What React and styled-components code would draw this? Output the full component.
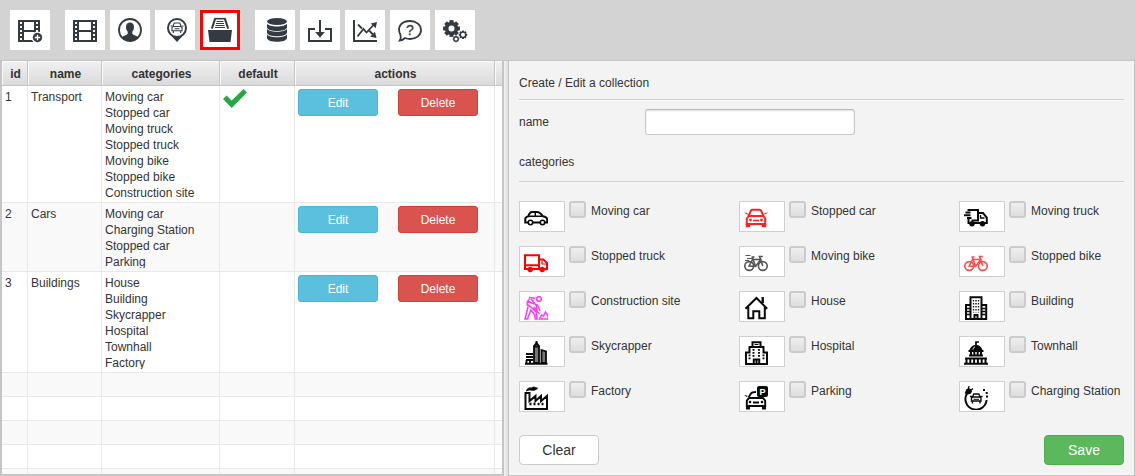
import React from 'react';
import styled, { createGlobalStyle } from 'styled-components';

const GlobalStyle = createGlobalStyle`
  * { box-sizing: border-box; }
  body {
    margin: 0;
    background: #d3d3d3;
    color: #333;
    font: 12px/16px "Liberation Sans", Arial, sans-serif;
  }
`;

const Page = styled.div`
  display: flex;
  flex-direction: column;
  height: 100vh;
`;

const Toolbar = styled.nav`
  display: flex;
  gap: 15px;
  padding: 10px;
`;

const ToolGroup = styled.div`
  display: flex;
  gap: 5px;
`;

const ToolButton = styled.button`
  width: 40px;
  height: 40px;
  padding: 0;
  border: 0;
  background: #fff;
  font: inherit;
  outline: ${(p) => (p.$active ? '3px solid #f00' : 'none')};
  outline-offset: -3px;
  cursor: pointer;

  svg { display: block; }
`;

const Workspace = styled.div`
  flex: 1;
  min-height: 0;
  display: grid;
  grid-template-columns: 504px 5px minmax(0, 1fr);
  border-top: 1px solid #c5c5c5;
`;

const GridPane = styled.section`
  min-height: 0;
  overflow: hidden;
  border: 2px solid #c5c5c5;
  border-top-width: 0;
  background: #fff;
`;

const Splitter = styled.div`
  background: linear-gradient(90deg, #f3f3f3, #dcdcdc);
  border-right: 1px solid #c5c5c5;
`;

const FormPane = styled.form`
  display: flex;
  flex-direction: column;
  overflow: hidden;
  padding: 10px;
  border: solid #c5c5c5;
  border-width: 0 1px 1px 0;
  background: #f3f3f3;
`;

const Table = styled.table`
  width: 100%;
  table-layout: fixed;
  border-collapse: separate;
  border-spacing: 0;
`;

const HeadCell = styled.th`
  height: 25px;
  padding: 2px 0 0 2px;
  border-right: 1px solid #c5c5c5;
  border-bottom: 1px solid #c5c5c5;
  background: linear-gradient(#f1f1f1, #dadada);
  box-shadow: inset 1px 1px 0 #fafafa;

  &:last-child { border-right: 0; }
`;

const Row = styled.tr`
  background: ${(p) => (p.$alt ? '#f9f9f9' : '#fff')};
`;

const Cell = styled.td`
  height: 24px;
  padding: 3px 3px 1px;
  vertical-align: top;
  border-right: 1px solid #e9e9e9;
  border-bottom: 1px solid #e9e9e9;

  &:last-child { border-right: 0; }
`;

const CategoryNames = styled.ul`
  margin: 0 0 2px;
  padding: 0;
  list-style: none;

  li { height: 16px; }
  li:last-child { height: 14px; overflow: hidden; }
`;

const Actions = styled.div`
  display: flex;
  gap: 20px;
`;

const tones = {
  edit: ['#5bc0de', '#46b8da'],
  delete: ['#d9534f', '#d43f3a'],
};

const RowButton = styled.button`
  width: 80px;
  height: 27px;
  padding: 0;
  border: 1px solid ${(p) => tones[p.$tone][1]};
  border-radius: 3px;
  background: ${(p) => tones[p.$tone][0]};
  color: #fff;
  font: inherit;
  cursor: pointer;
`;

const SectionTitle = styled.h2`
  margin: 0;
  padding: 4px 0 ${(p) => (p.$spaced ? 11 : 8)}px;
  border-bottom: 1px solid #cfcfcf;
  box-shadow: 0 1px 0 #fafafa;
  font: inherit;
`;

const Field = styled.div`
  display: grid;
  grid-template-columns: 126px 210px;
  align-items: center;
  margin: 9px 0 15px;
`;

const TextInput = styled.input`
  height: 26px;
  padding: 0 6px;
  border: 1px solid #c9c9c9;
  border-top-color: #b9b9b9;
  border-radius: 3px;
  background: #fff;
  box-shadow: inset 0 1px 2px #ddd;
  font: inherit;
`;

const CategoryGrid = styled.div`
  display: grid;
  grid-template-columns: 1fr 1fr 165px;
  row-gap: 14px;
  margin-top: 19px;
`;

const CategoryOption = styled.label`
  display: flex;
  align-items: flex-start;
  height: 31px;
  white-space: nowrap;
  cursor: pointer;
`;

const Thumb = styled.span`
  width: 46px;
  height: 31px;
  padding: 4px;
  border: 1px solid #d0d0d0;
  background: #fff;

  svg { display: block; }
`;

const Checkbox = styled.input`
  appearance: none;
  width: 17px;
  height: 17px;
  margin: 0 5px 0 4px;
  border: 2px solid #cbcbcb;
  border-radius: 3px;
  background: linear-gradient(#efefef, #dedede);

  &:checked { background: #5bc0de; }
`;

const OptionText = styled.span`
  padding-top: 2px;
`;

const Footer = styled.div`
  display: flex;
  justify-content: space-between;
  margin-top: auto;
`;

const FormButton = styled.button`
  width: 80px;
  height: 30px;
  padding: 0;
  border: 1px solid ${(p) => (p.$primary ? '#4cae4c' : '#ccc')};
  border-radius: 4px;
  background: ${(p) => (p.$primary ? '#5cb85c' : '#fff')};
  color: ${(p) => (p.$primary ? '#fff' : '#333')};
  font: inherit;
  font-size: 14px;
  cursor: pointer;
`;

const INK = '#343a42';

function ToolIcon({ children }) {
  return (
    <svg width="40" height="40" viewBox="0 0 40 40" fill="none" stroke={INK} strokeWidth="2" aria-hidden="true">
      {children}
    </svg>
  );
}

function Film({ right }) {
  const holes = [12, 16, 20, 24, 28];
  return (
    <g stroke="none">
      <rect x="8" y="10" width={right - 8} height="22" fill={INK} />
      <rect x="14" y="12" width={right - 20} height="8" fill="#fff" />
      <rect x="14" y="22" width={right - 20} height="8" fill="#fff" />
      {holes.map((y) => (
        <g key={y} fill="#fff">
          <rect x="10" y={y} width="2" height="2" />
          <rect x={right - 4} y={y} width="2" height="2" />
        </g>
      ))}
    </g>
  );
}

function Gear({ x, y, r, hole, tooth }) {
  return (
    <g transform={`translate(${x} ${y})`} stroke="none">
      {[0, 45, 90, 135].map((a) => (
        <rect key={a} x={-tooth / 2} y={-r} width={tooth} height={r * 2} fill={INK} transform={`rotate(${a})`} />
      ))}
      <circle r={r * 0.8} fill={INK} />
      <circle r={hole} fill="#fff" />
    </g>
  );
}

const toolIcons = {
  addVideo: (
    <>
      <Film right={30} />
      <circle cx="27.5" cy="27.5" r="6" fill="#fff" stroke="none" />
      <circle cx="27.5" cy="27.5" r="4.7" fill={INK} stroke="none" />
      <path d="M27.5 24.8v5.4M24.8 27.5h5.4" stroke="#fff" strokeWidth="1.4" />
    </>
  ),
  videos: <Film right={32} />,
  users: (
    <>
      <circle cx="20" cy="20" r="11" strokeWidth="1.8" />
      <path d="M16 17c0-3 1.5-4.6 4-4.6s4 1.6 4 4.6c0 2-.7 3.6-1.7 4.8v2c1 1.6 4.2 1.8 6.2 3.7C26.5 30 23.5 31 20 31s-6.500-1-8.500-3.500c2-1.900 5.200-2.100 6.200-3.700v-2C16.700 20.600 16 19 16 17z" fill={INK} stroke="none" />
    </>
  ),
  locations: (
    <>
      <path d="M16 25.500l6 6.500 6-6.500z" fill={INK} stroke="none" />
      <circle cx="22" cy="18" r="9" fill="#fff" strokeWidth="2" />
      <path d="M18 16.500l1.200-3.500h5.600l1.200 3.500M17 20.800v-3.300l1.200-1h7.600l1.200 1v3.300zM18.300 21v2M25.700 21v2M19.500 18.800h5M15.500 16h1.800M26.700 16h1.800" strokeWidth="1.100" />
    </>
  ),
  collections: (
    <>
      <path d="M8 20h24l-1.500 12h-21z" fill={INK} stroke="none" />
      <path d="M11.800 18.600l3.300-9.700M28.200 18.600l-3.300-9.700" strokeWidth="2" />
      <path d="M14.300 8.700h11.400" strokeWidth="1.600" />
      <path d="M16.500 11.500h7M16 13.500h8M15.500 15.500h9M15 17.500h10" strokeWidth="1" />
    </>
  ),
  database: (
    <g fill={INK} stroke="none">
      <ellipse cx="22" cy="11.500" rx="10" ry="3.500" />
      {[13.5, 18.8, 24.2].map((y) => (
        <path key={y} d={`M12 ${y}c1.500 4 18.500 4 20 0v4c-1 4.700-19 4.700-20 0z`} />
      ))}
    </g>
  ),
  importData: (
    <>
      <path d="M15 19H9v12h22V19h-6M20 10v14" strokeWidth="2" />
      <path d="M15.200 22h9.600L20 27.800z" fill={INK} stroke="none" />
    </>
  ),
  statistics: (
    <>
      <path d="M9 10v21h23" />
      <path d="M12.500 26.500l6-7.500 3 3.500 7.500-8M13 14.500l4 4M23.500 20l5 5" strokeWidth="1.800" />
      <path d="M32 12l-1.400 6.200-4.800-4.600zM31.500 28l-6.300-1.300 4.800-5z" fill={INK} stroke="none" />
    </>
  ),
  help: (
    <>
      <path d="M10.500 25C6 16 12.500 11 20 11c6.500 0 11 4 11 9s-4.500 9-11 9c-2 0-3.500-.4-5-1-1.500 1.500-3.200 2.300-5.300 2.600 1-1.700 1.400-3.600.8-5.600z" strokeWidth="1.800" />
      <text x="20" y="25" textAnchor="middle" fontSize="14" fill={INK} stroke={INK} strokeWidth="0.300">?</text>
    </>
  ),
  settings: (
    <>
      <Gear x={16.5} y={18.5} r={8.4} hole={3} tooth={4} />
      <Gear x={28} y={24.8} r={4.2} hole={2} tooth={2} />
      <Gear x={21} y={29} r={3.3} hole={1.5} tooth={1.5} />
    </>
  ),
};

function CategoryIcon({ color = '#0a0a0a', children }) {
  return (
    <svg width="24" height="24" viewBox="0 0 24 24" color={color} fill="none" stroke="currentColor" strokeWidth="1.600" aria-hidden="true">
      {children}
    </svg>
  );
}

const bike = (
  <>
    <circle cx="5.200" cy="15" r="4.400" />
    <circle cx="18.800" cy="15" r="4.400" />
    <path d="M5.200 15L8.500 8.500h8.200L11.500 15.500zM7.500 6h3M8.500 6.500l3 9M18.800 15L15.500 5.500h3.300" />
  </>
);

const categoryIcons = {
  'Moving car': (
    <CategoryIcon>
      <path d="M4 16.500H1.300v-4.200c.7-1.200 1.700-1.700 3-2C5.300 7.300 6.200 6 8 6h5c2.500 0 4 1.500 6 4.300 2.800.5 4.200 1.500 4.200 3.700v2.500H21M9 16.500h7" strokeWidth="2" />
      <path d="M5 10.300h13M11.300 6v4.300" strokeWidth="1.500" />
      <circle cx="6.500" cy="16.500" r="2.200" fill="#fff" />
      <circle cx="18.500" cy="16.500" r="2.200" fill="#fff" />
    </CategoryIcon>
  ),
  'Stopped car': (
    <CategoryIcon color="#f22">
      <path d="M4.500 10L7 4.500Q7.500 3.800 9 3.800h6q1.500 0 2 .7L19.500 10M2.800 18v-5.500L4.800 10h14.400l2 2.500V18z" strokeWidth="2" />
      <path d="M1.800 18h4.400v3.300H1.800zM17.800 18h4.400v3.300h-4.400zM0 6.500l3.500.5v2zM24 6.500l-3.500.5v2z" fill="currentColor" stroke="none" />
      <circle cx="6.500" cy="14" r="1.400" fill="currentColor" stroke="none" />
      <circle cx="17.500" cy="14" r="1.400" fill="currentColor" stroke="none" />
      <path d="M9 14.500h6" />
    </CategoryIcon>
  ),
  'Moving truck': (
    <CategoryIcon>
      <path d="M3.500 4H14v10.500H7.500M14 7h5l3.800 4.500V17h-2.300M1.500 6.500h5M0 9.200h6.500M3 12h4.500M4.500 12v5H6M10 17h6.500" strokeWidth="2" />
      <path d="M16.500 9v3h4" strokeWidth="1.300" />
      <circle cx="8" cy="17.800" r="2.700" fill="currentColor" stroke="none" />
      <circle cx="18.500" cy="17.800" r="2.700" fill="currentColor" stroke="none" />
    </CategoryIcon>
  ),
  'Stopped truck': (
    <CategoryIcon color="#f00">
      <path d="M1 4.300h14V18H1zM1 14.300h14M15 8.500h4.500L23 12v6h-8" strokeWidth="2" />
      <path d="M18 9.500v3.500h4.500" strokeWidth="1.200" />
      <circle cx="6.200" cy="18.500" r="2.700" fill="currentColor" stroke="none" />
      <circle cx="18.200" cy="18.500" r="2.700" fill="currentColor" stroke="none" />
    </CategoryIcon>
  ),
  'Moving bike': (
    <CategoryIcon color="#555">
      {bike}
      <path d="M1.500 4.500h5M3 7.500h5M1 9.500h4" strokeWidth="1.200" />
    </CategoryIcon>
  ),
  'Stopped bike': <CategoryIcon color="#ff4b4b">{bike}</CategoryIcon>,
  'Construction site': (
    <CategoryIcon color="#fa3cfa">
      <circle cx="15" cy="3" r="2.300" />
      <path d="M5 1.500l6.500.8M6 2.500C3 5 2.500 7 3.500 9.500l4 1.500M7 3l5 6 1 5-3.500-3M4 5l6 3M13 8l3 7M4 11L1 23h2.500l3.300-9 3.500 4 1 5h2l-1.300-7-5-5M3 8l13 10M15.500 23l2-4 2 1 2-4L24 20v3z" strokeWidth="1.500" />
    </CategoryIcon>
  ),
  House: (
    <CategoryIcon>
      <path d="M1.500 12.800L12.500 2l10.700 10.800M4.300 11v11.300h5v-7h6v7h5.500V11" strokeWidth="2" />
      <path d="M18.700 1v6" strokeWidth="2.400" />
    </CategoryIcon>
  ),
  Building: (
    <CategoryIcon>
      <path d="M6.500 23V1.200h11V23M6.500 9H2v14h20.200V9h-4.700M10.500 23v-4h3v4" strokeWidth="2" />
      <path d="M9.500 4v12.500M12 4v12.500M14.500 4v12.500" strokeDasharray="1.500 1.500" strokeWidth="1.300" />
      <path d="M3 12.500h3M3 15.500h3M3 18.500h3M18 12.500h3.500M18 15.500h3.500M18 18.500h3.500" strokeWidth="1.300" />
    </CategoryIcon>
  ),
  Skycrapper: (
    <CategoryIcon>
      <path d="M10 22V5l2.500-3L15 5v17zM17.500 9l4.500 1.500V22h-4.500z" fill="#777" strokeWidth="1.800" />
      <path d="M12.500 0v4M9.500 5.500h6M2 13h7M2 16h7M2 19h7M1 22.800h22.500M2.500 22v-3M6 22v-3" strokeWidth="1.900" />
    </CategoryIcon>
  ),
  Hospital: (
    <CategoryIcon>
      <path d="M8.500 6V1.200h8V6M2 23V11.500h3.500V6h14v5.500H23V23zM9.800 23v-4.500h5.400V23M12.500 18.500V23" strokeWidth="2" />
      <path d="M10.500 3.500h4M10.500 5.500h4" strokeWidth="1" />
      <path d="M9.500 8v9M15 8v9M5.500 13.500v6M19.500 13.500v6" strokeWidth="1.900" strokeDasharray="1.700 1.300" />
    </CategoryIcon>
  ),
  Townhall: (
    <CategoryIcon>
      <path d="M12 4V1h3" strokeWidth="1.700" />
      <path d="M5.500 9.500C6.500 2 17.500 2 18.500 9.500z" fill="currentColor" stroke="none" />
      <path d="M9 8.500c.3-1.500 1-2.300 2-2.800" stroke="#fff" strokeWidth="1" />
      <path d="M4.500 10h15M7 11v4M10.300 11v4M13.700 11v4M17 11v4M5 14.500h14M1 17.500h22M2.500 18v4M6.300 18v4M10.100 18v4M13.900 18v4M17.700 18v4M21.500 18v4M0 22.800h24" strokeWidth="2" />
    </CategoryIcon>
  ),
  Factory: (
    <CategoryIcon>
      <path d="M1.500 23V7h4v8l6-5v5l5.500-5v5l6-5v13z" strokeWidth="2" />
      <path d="M2.500 5c.5-2.500 2.500-3.500 5-3 2.500-2 3.500 0 6 .2-2 2-4 2.500-6.500 1.800C5.500 3.700 4 4 2.500 5z" fill="currentColor" strokeWidth="1" />
      <path d="M5.500 18h14" strokeWidth="2.400" strokeDasharray="2 2" />
    </CategoryIcon>
  ),
  Parking: (
    <CategoryIcon>
      <rect x="13" y="0" width="11" height="11" rx="2" fill="currentColor" stroke="none" />
      <text x="18.500" y="9" textAnchor="middle" fontSize="9" fontWeight="bold" fill="#fff" stroke="none">P</text>
      <path d="M4.500 11.500L7 7.500Q8 6 12 6M2.800 20v-5.500L5 12h14l2.200 2.500V20zM9 16.500h6" strokeWidth="1.900" />
      <path d="M2 20h4v3.500H2zM18 20h4v3.500h-4zM0 9l3.500.7-.5 1.500z" fill="currentColor" stroke="none" />
      <circle cx="6" cy="16" r="1.300" fill="currentColor" stroke="none" />
      <circle cx="18" cy="16" r="1.300" fill="currentColor" stroke="none" />
    </CategoryIcon>
  ),
  'Charging Station': (
    <CategoryIcon>
      <path d="M2.700 8A10.600 10.600 0 1 0 22.600 14" strokeWidth="2" />
      <path d="M1.500 7L3 3.500l2.500-.5 2 2L6.500 7 3.500 8zM4 3L5.200 0M6.500 4.500L9 2.500" fill="currentColor" strokeWidth="1.300" />
      <path d="M19 4h2M21.700 7h2M22 10.500h2" strokeWidth="2" />
      <path d="M8.500 11l1.300-3h5l1.300 3M7.500 15v-3l1.500-1h6.500l1.500 1v3zM8.500 15.500v2M16 15.500v2M6 10.500h2M16.500 10.500h2" strokeWidth="1.400" />
      <path d="M9.500 13.300h5.500" strokeWidth="1" />
    </CategoryIcon>
  ),
};

const toolGroups = [
  [['addVideo', 'Add video']],
  [['videos', 'Videos'], ['users', 'Users'], ['locations', 'Categories'], ['collections', 'Collections']],
  [['database', 'Database'], ['importData', 'Import'], ['statistics', 'Statistics'], ['help', 'Help'], ['settings', 'Settings']],
];

const collections = [
  {
    id: 1,
    name: 'Transport',
    isDefault: true,
    categories: ['Moving car', 'Stopped car', 'Moving truck', 'Stopped truck', 'Moving bike', 'Stopped bike', 'Construction site'],
  },
  { id: 2, name: 'Cars', categories: ['Moving car', 'Charging Station', 'Stopped car', 'Parking'] },
  { id: 3, name: 'Buildings', categories: ['House', 'Building', 'Skycrapper', 'Hospital', 'Townhall', 'Factory'] },
];

const categoryOrder = [
  'Moving car', 'Stopped car', 'Moving truck',
  'Stopped truck', 'Moving bike', 'Stopped bike',
  'Construction site', 'House', 'Building',
  'Skycrapper', 'Hospital', 'Townhall',
  'Factory', 'Parking', 'Charging Station',
];

const columnWidths = [26, 74, 118, 75, 200];
const columnTitles = ['id', 'name', 'categories', 'default', 'actions', ''];
const fillerRows = [0, 1, 2, 3, 4];

function DefaultMark() {
  return (
    <svg width="24" height="19" viewBox="0 0 24 19" role="img" aria-label="default">
      <path d="M0 10l3.500-3.500L8.700 11.500 20.500 0 24 3.500 8.700 19z" fill="#28a745" />
    </svg>
  );
}

export default function App() {
  return (
    <Page>
      <GlobalStyle />
      <Toolbar>
        {toolGroups.map((group) => (
          <ToolGroup key={group[0][0]}>
            {group.map(([key, label]) => (
              <ToolButton key={key} type="button" aria-label={label} $active={key === 'collections'}>
                <ToolIcon>{toolIcons[key]}</ToolIcon>
              </ToolButton>
            ))}
          </ToolGroup>
        ))}
      </Toolbar>
      <Workspace>
        <GridPane>
          <Table>
            <colgroup>
              {columnWidths.map((w, i) => <col key={i} width={w} />)}
              <col />
            </colgroup>
            <thead>
              <tr>{columnTitles.map((t) => <HeadCell key={t}>{t}</HeadCell>)}</tr>
            </thead>
            <tbody>
              {collections.map((c, i) => (
                <Row key={c.id} $alt={i % 2 === 1}>
                  <Cell>{c.id}</Cell>
                  <Cell>{c.name}</Cell>
                  <Cell>
                    <CategoryNames>
                      {c.categories.map((n) => <li key={n}>{n}</li>)}
                    </CategoryNames>
                  </Cell>
                  <Cell>{c.isDefault && <DefaultMark />}</Cell>
                  <Cell>
                    <Actions>
                      <RowButton type="button" $tone="edit">Edit</RowButton>
                      <RowButton type="button" $tone="delete">Delete</RowButton>
                    </Actions>
                  </Cell>
                  <Cell />
                </Row>
              ))}
              {fillerRows.map((r) => (
                <Row key={r} $alt={r % 2 === 0}>
                  {columnTitles.map((t) => <Cell key={t} />)}
                </Row>
              ))}
            </tbody>
          </Table>
        </GridPane>
        <Splitter />
        <FormPane onSubmit={(e) => e.preventDefault()}>
          <SectionTitle>Create / Edit a collection</SectionTitle>
          <Field>
            <label htmlFor="collection-name">name</label>
            <TextInput id="collection-name" type="text" />
          </Field>
          <SectionTitle $spaced>categories</SectionTitle>
          <CategoryGrid>
            {categoryOrder.map((name) => (
              <CategoryOption key={name}>
                <Thumb>{categoryIcons[name]}</Thumb>
                <Checkbox type="checkbox" />
                <OptionText>{name}</OptionText>
              </CategoryOption>
            ))}
          </CategoryGrid>
          <Footer>
            <FormButton type="reset">Clear</FormButton>
            <FormButton type="submit" $primary>Save</FormButton>
          </Footer>
        </FormPane>
      </Workspace>
    </Page>
  );
}
